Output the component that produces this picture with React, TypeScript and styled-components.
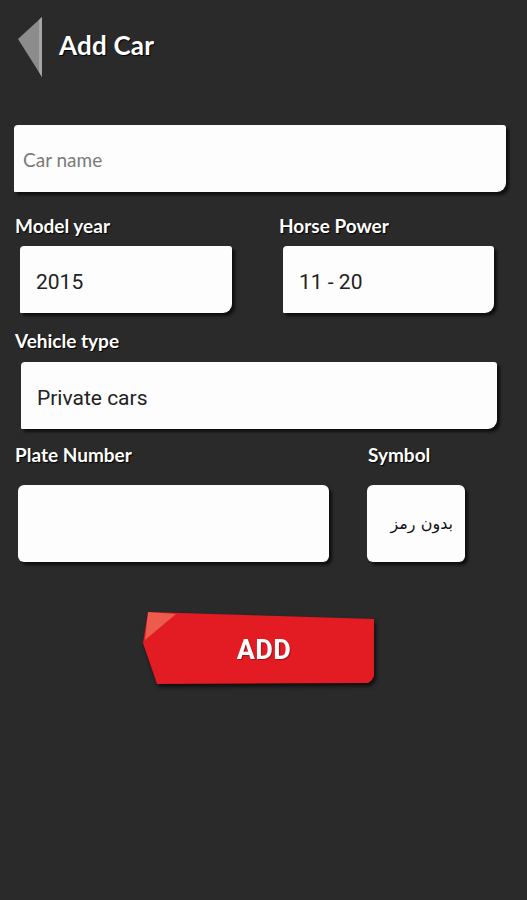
import React from 'react';
import styled, { createGlobalStyle } from 'styled-components';

const GlobalStyle = createGlobalStyle`
    html, body {
        margin: 0;
        padding: 0;
        background: #2a2a2a;
    }
    body {
        font-family: Lato, "Open Sans", sans-serif;
    }
`;

const Page = styled.div`
    width: 527px;
    min-height: 900px;
    background: #2a2a2a;
    display: flex;
    flex-direction: column;
`;

const Header = styled.div`
    height: 94px;
    display: flex;
    align-items: center;
    padding-left: 18px;
    gap: 17px;
`;

const BackArrow = styled.svg`
    width: 24px;
    height: 60px;
    flex-shrink: 0;
`;

const Title = styled.h1`
    margin: 0 0 4px 0;
    color: #fff;
    font-family: Lato, sans-serif;
    font-weight: 700;
    font-size: 26px;
    letter-spacing: 0.2px;
    text-shadow: 1px 1px 1px #000;
`;

const Form = styled.div`
    display: flex;
    flex-direction: column;
    padding: 31px 0 0 14px;
`;

const Row = styled.div<{ $gap: number }>`
    display: flex;
    gap: ${p => p.$gap}px;
`;

const Column = styled.div`
    display: flex;
    flex-direction: column;
`;

const Label = styled.div<{ $top: number }>`
    margin: ${p => p.$top}px 0 0 1px;
    height: 24px;
    line-height: 24px;
    color: #fff;
    font-family: Lato, sans-serif;
    font-weight: 700;
    font-size: 19px;
    text-shadow: 1px 1px 1px #000;
`;

const Box = styled.div<{ $width: number; $height?: number; $left?: number; $top?: number; $round?: boolean }>`
    box-sizing: border-box;
    width: ${p => p.$width}px;
    height: ${p => p.$height ?? 67}px;
    margin-left: ${p => p.$left ?? 0}px;
    margin-top: ${p => p.$top ?? 0}px;
    background: #fdfdfd;
    border-radius: ${p => (p.$round ? '6px' : '4px 3px 9px 1px')};
    box-shadow: 3px 3px 3px rgba(0, 0, 0, 0.65);
    display: flex;
    align-items: center;
    padding: 4px 0 0 16px;
    font-family: Roboto, sans-serif;
    font-size: 21px;
    color: #222;
`;

const Placeholder = styled.span`
    margin: -3px 0 0 -7px;
    font-family: Lato, sans-serif;
    font-size: 19px;
    color: #7a7a7a;
`;

const SymbolText = styled.span`
    width: 100%;
    padding: 0 12px 4px 0;
    text-align: right;
    direction: rtl;
    font-family: "DejaVu Sans", sans-serif;
    font-size: 16px;
    color: #111;
`;

const ButtonWrap = styled.div`
    margin: 50px 0 0 129px;
    width: 232px;
    height: 72px;
    filter: drop-shadow(2px 3px 2px rgba(0, 0, 0, 0.7));
`;

const AddButton = styled.button`
    position: relative;
    width: 100%;
    height: 100%;
    border: 0;
    padding: 4px 0 0 10px;
    background: #e31b23;
    clip-path: polygon(5px 0, 231px 7px, 231px 64px, 229px 68px, 225px 71px, 14px 72px, 0 31px);
    color: #fff;
    font-family: Roboto, sans-serif;
    font-weight: 700;
    font-size: 27px;
    letter-spacing: 0.5px;
    text-shadow: 1px 1px 1px rgba(0, 0, 0, 0.3);
    cursor: pointer;
    &::before {
        content: '';
        position: absolute;
        left: 0;
        top: 0;
        width: 34px;
        height: 30px;
        background: #ec5b4b;
        clip-path: polygon(5px 0, 33px 2px, 2px 28px);
    }
`;

export default function App() {
    return (
        <Page>
            <GlobalStyle />
            <Header>
                <BackArrow viewBox="0 0 24 60">
                    <polygon points="24,0 24,60 0,22" fill="#8c8c8c" />
                    <polygon points="24,0 21,3 21,55 24,60" fill="#a6a6a6" />
                </BackArrow>
                <Title>Add Car</Title>
            </Header>
            <Form>
                <Box $width={492}>
                    <Placeholder>Car name</Placeholder>
                </Box>
                <Row $gap={46}>
                    <Column>
                        <Label $top={22}>Model year</Label>
                        <Box $width={212} $left={6} $top={8}>2015</Box>
                    </Column>
                    <Column>
                        <Label $top={22}>Horse Power</Label>
                        <Box $width={211} $left={5} $top={8}>11 - 20</Box>
                    </Column>
                </Row>
                <Label $top={16}>Vehicle type</Label>
                <Box $width={476} $left={7} $top={9}>Private cars</Box>
                <Row $gap={38}>
                    <Column>
                        <Label $top={14}>Plate Number</Label>
                        <Box $width={311} $height={77} $left={4} $top={18} $round />
                    </Column>
                    <Column>
                        <Label $top={14}>Symbol</Label>
                        <Box $width={98} $height={77} $top={18} $round>
                            <SymbolText>بدون رمز</SymbolText>
                        </Box>
                    </Column>
                </Row>
                <ButtonWrap>
                    <AddButton>ADD</AddButton>
                </ButtonWrap>
            </Form>
        </Page>
    );
}
